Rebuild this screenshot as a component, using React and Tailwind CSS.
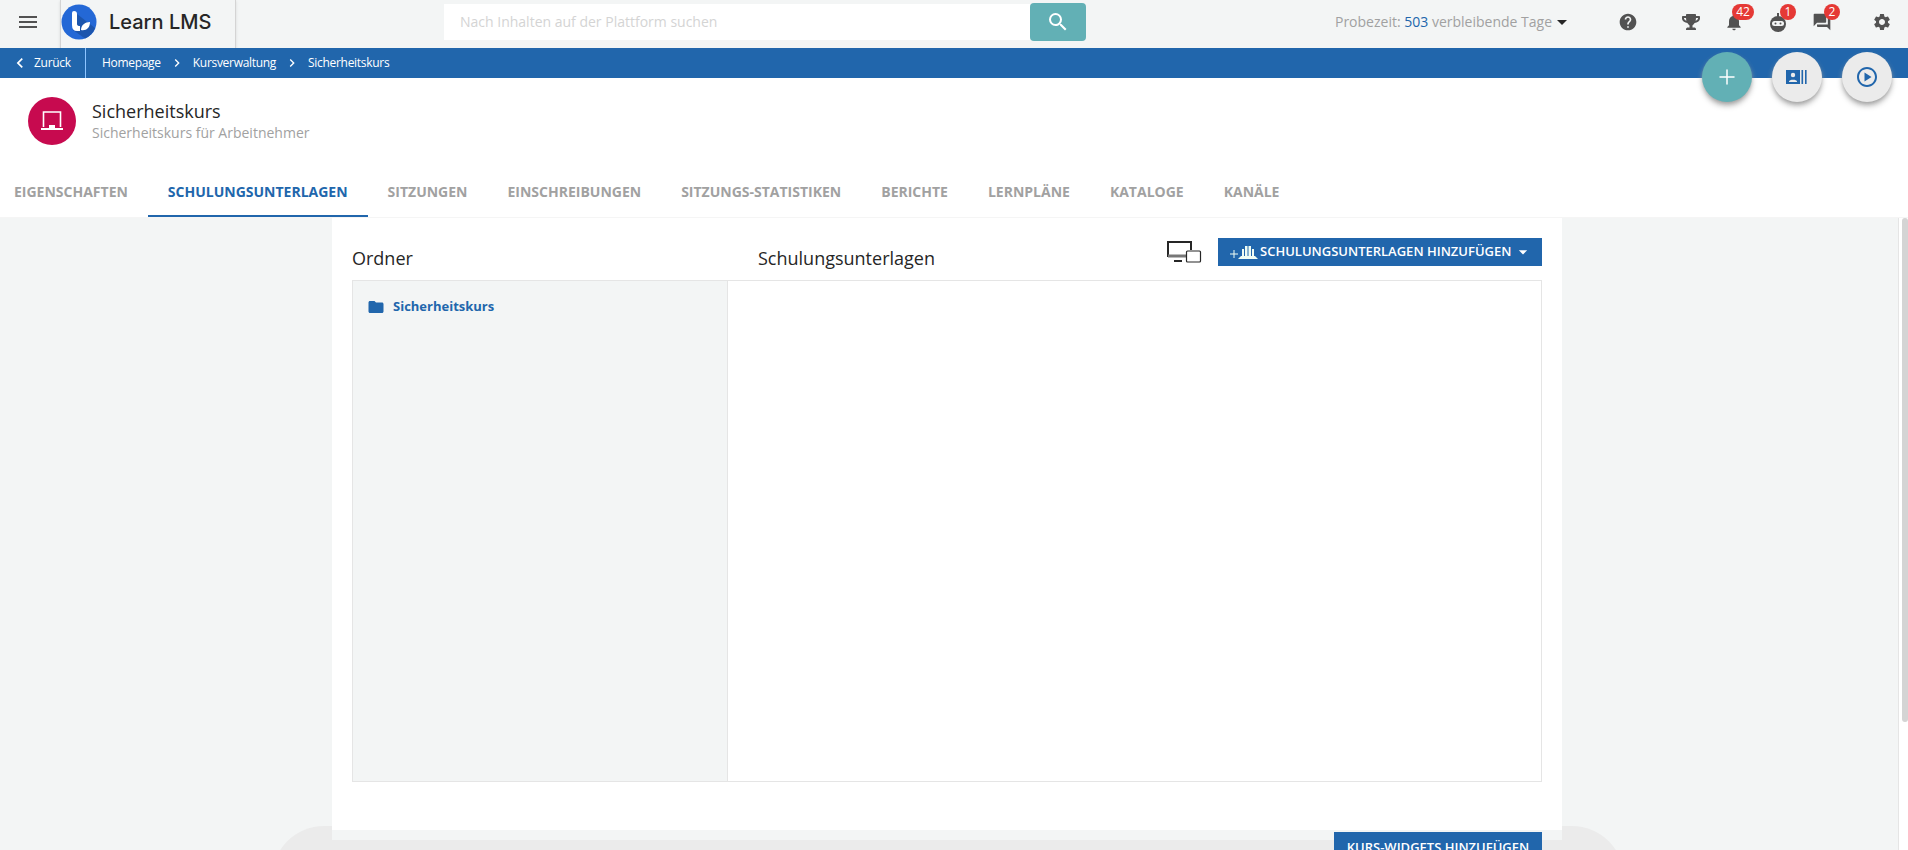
import { MdMenu, MdSearch, MdHelp, MdNotifications, MdQuestionAnswer, MdSettings, MdFolder, MdArrowDropDown, MdChevronLeft, MdChevronRight, MdOutlinePlayCircle } from "react-icons/md";
import { FaTrophy } from "react-icons/fa";
import { Plus } from "lucide-react";

const tabs = [
  "Eigenschaften",
  "Schulungsunterlagen",
  "Sitzungen",
  "Einschreibungen",
  "Sitzungs-Statistiken",
  "Berichte",
  "Lernpläne",
  "Kataloge",
  "Kanäle",
];

const Logo = () => (
  <svg viewBox="0 0 36 36" className="w-9 h-9 shrink-0">
    <circle cx="18" cy="18" r="17.5" fill="#2468d6" />
    <path d="M16 10 L34 24 A17.5 17.5 0 0 1 24 34.5 L12 26 Z" fill="#1c55ad" />
    <path d="M11 9 Q11 7 13 7 Q16 7 16 10 V20 Q16 22 19 22 V27 H16 Q11 27 11 21 Z" fill="#fff" />
    <path d="M20 26 C20 21 24 18 29 18 C29 24 25 27 20 26 Z" fill="#fff" />
  </svg>
);

const Badge = ({ className, children }) => (
  <span className={`absolute -top-2 h-4 rounded-full bg-[#e53935] text-white text-xs flex items-center justify-center ${className}`}>
    {children}
  </span>
);

const Robot = () => (
  <svg viewBox="0 0 20 20" className="w-5 h-5" fill="currentColor">
    <circle cx="10" cy="12" r="8" />
    <rect x="9" y="1" width="2" height="4" />
    <rect x="4" y="9" width="12" height="5" rx="2.5" fill="#f3f5f5" />
    <circle cx="7.5" cy="11.5" r="1" />
    <circle cx="12.5" cy="11.5" r="1" />
  </svg>
);

const Devices = () => (
  <svg viewBox="0 0 36 24" className="w-9 h-6 mt-0.5 text-neutral-800" fill="none" stroke="currentColor">
    <path d="M20 16 H2 V2 H25 V10" strokeWidth="2" />
    <path d="M2 16 H20" strokeWidth="3" stroke="#777" />
    <rect x="8" y="20" width="8" height="2" fill="currentColor" stroke="none" />
    <rect x="20.5" y="11" width="14" height="11" rx="1" fill="#fff" strokeWidth="1.2" />
  </svg>
);

const AddMaterial = () => (
  <svg viewBox="0 0 28 16" className="w-7 h-4 text-green-50 shrink-0" fill="currentColor">
    <path d="M0 10 H8 M4 6 V14" stroke="currentColor" fill="none" />
    <path d="M8 15 H28 L25 12 H11 Z" />
    <rect x="12" y="5" width="2" height="7" />
    <rect x="15" y="2" width="2.5" height="10" />
    <rect x="18.5" y="2" width="2.5" height="10" />
    <rect x="22" y="5" width="2" height="7" />
  </svg>
);

const CardIcon = () => (
  <svg viewBox="0 0 22 14" className="w-5.5 h-3.5" fill="currentColor">
    <rect width="14" height="14" />
    <circle cx="7" cy="5" r="2.2" fill="#ebebeb" />
    <path d="M3 11.5 C3 9 11 9 11 11.5 V12 H3 Z" fill="#ebebeb" />
    <rect x="15.5" width="1.6" height="14" />
    <rect x="19" width="1.6" height="14" />
  </svg>
);

const Screen = () => (
  <svg viewBox="0 0 24 20" className="w-6 h-5 text-white" fill="none" stroke="currentColor" strokeWidth="1.6">
    <path d="M3.5 16 V1 H20.5 V16" />
    <rect x="9" y="14" width="6" height="3" fill="currentColor" stroke="none" />
    <rect x="1" y="17" width="22" height="2" fill="currentColor" stroke="none" />
  </svg>
);

const Fab = ({ className, children }) => (
  <div className={`w-12.5 h-12.5 rounded-full shadow-md shadow-neutral-400 flex items-center justify-center ${className}`}>
    {children}
  </div>
);

export default function App() {
  return (
    <div className="relative h-[850px] overflow-hidden flex flex-col bg-white text-neutral-800 font-['Open_Sans',sans-serif]">
      {/* top bar */}
      <header className="h-12 shrink-0 bg-[#f3f5f5] flex items-center pb-1">
        <div className="w-15 flex justify-center pr-1">
          <MdMenu className="w-6 h-6 text-neutral-600" />
        </div>
        <div className="w-44 self-stretch -mb-1 pb-1 flex items-center gap-3 border-x border-neutral-300 shadow-sm">
          <Logo />
          <span className="font-['Inter',sans-serif] font-medium text-xl text-neutral-800">Learn LMS</span>
        </div>
        <div className="ml-52 flex items-center">
          <div className="w-[586px] h-9 bg-white px-4 flex items-center text-sm text-neutral-300">
            Nach Inhalten auf der Plattform suchen
          </div>
          <div className="w-14 h-9.5 rounded-sm bg-[#62b0b5] flex items-center justify-center">
            <MdSearch className="w-6 h-6 text-white" />
          </div>
        </div>
        <div className="ml-auto flex items-center">
          <div className="flex items-center text-sm text-neutral-400">
            Probezeit:&nbsp;<span className="text-[#2166ac]">503</span>&nbsp;verbleibende Tage
            <MdArrowDropDown className="w-6 h-6 text-neutral-800 -ml-0.5" />
          </div>
          <div className="ml-11 mr-4 flex items-center gap-10 text-neutral-600">
            <MdHelp className="w-5 h-5 mr-1" />
            <div className="flex items-center gap-6">
              <FaTrophy className="w-4.5 h-4.5" />
              <div className="relative">
                <MdNotifications className="w-5 h-5" />
                <Badge className="left-2 w-5.5">42</Badge>
              </div>
              <div className="relative">
                <Robot />
                <Badge className="left-3 w-4">1</Badge>
              </div>
              <div className="relative">
                <MdQuestionAnswer className="w-5 h-5" />
                <Badge className="left-3 w-4">2</Badge>
              </div>
            </div>
            <MdSettings className="w-5 h-5" />
          </div>
        </div>
      </header>

      {/* breadcrumb */}
      <nav className="h-7.5 shrink-0 bg-[#2166ac] flex items-center text-xs tracking-tight text-white">
        <div className="h-full w-[86px] border-r border-blue-300 flex items-center pl-2.5 gap-1">
          <MdChevronLeft className="w-5 h-5" />
          Zurück
        </div>
        <div className="ml-4 flex items-center gap-2">
          <span>Homepage</span>
          <MdChevronRight className="w-4 h-4" />
          <span>Kursverwaltung</span>
          <MdChevronRight className="w-4 h-4" />
          <span>Sicherheitskurs</span>
        </div>
      </nav>

      {/* floating buttons */}
      <div className="absolute top-13 right-4 flex gap-5">
        <Fab className="bg-[#62b0b5] text-white">
          <Plus className="w-6 h-6" strokeWidth={1.5} />
        </Fab>
        <Fab className="bg-[#ebebeb] text-[#2166ac]">
          <CardIcon />
        </Fab>
        <Fab className="bg-[#ebebeb] text-[#2166ac]">
          <MdOutlinePlayCircle className="w-6 h-6" />
        </Fab>
      </div>

      {/* course header */}
      <div className="h-17.5 shrink-0 flex items-center gap-4 pl-7 pt-4">
        <div className="w-12 h-12 rounded-full bg-[#c70a4f] flex items-center justify-center">
          <Screen />
        </div>
        <div>
          <div className="text-lg leading-6 text-neutral-800">Sicherheitskurs</div>
          <div className="text-sm text-neutral-400">Sicherheitskurs für Arbeitnehmer</div>
        </div>
      </div>

      {/* tabs */}
      <div className="h-17.5 shrink-0 flex border-b border-neutral-100 -ml-1.5">
        {tabs.map((t, i) => (
          <div
            key={t}
            className={`h-full flex items-center px-5 pt-5 text-sm font-bold uppercase border-b-2 ${
              i === 1 ? "text-[#2166ac] border-[#2166ac]" : "text-neutral-400 border-transparent"
            }`}
          >
            {t}
          </div>
        ))}
      </div>

      {/* body */}
      <div className="relative flex-1 min-h-0 bg-[#f3f5f5] flex">
        <div className="absolute left-68 right-71 top-152 h-16 bg-[#ebebeb] rounded-t-[52px]" />
        <div className="relative flex-1 flex justify-center pr-1">
          <main className="w-[1230px] bg-white flex flex-col">
            <div className="flex items-start h-7 mt-5 px-5">
              <h2 className="w-[406px] mt-1.5 text-lg text-neutral-800">Ordner</h2>
              <h2 className="mt-1.5 text-lg text-neutral-800">Schulungsunterlagen</h2>
              <div className="ml-auto flex items-start gap-4">
                <Devices />
                <button className="h-7 w-81 bg-[#2166ac] flex items-center pl-3 gap-0.5 whitespace-nowrap text-[13px] font-semibold uppercase text-white">
                  <AddMaterial />
                  Schulungsunterlagen hinzufügen
                  <MdArrowDropDown className="w-5 h-5 shrink-0" />
                </button>
              </div>
            </div>
            <div className="mx-5 mt-3.5 h-[502px] shrink-0 border border-neutral-200 flex">
              <div className="w-[375px] bg-[#f3f5f5] border-r border-neutral-200 pt-4 pl-3.5 flex items-start gap-2">
                <MdFolder className="w-4.5 h-5 text-[#2166ac]" />
                <span className="text-[13px] font-bold text-[#2166ac]">Sicherheitskurs</span>
              </div>
              <div className="flex-1 bg-white" />
            </div>
            <div className="relative mt-12 flex-1 bg-[#f3f5f5]">
              <div className="mt-2.5 h-full bg-[#ebebeb]" />
              <button className="absolute top-0.5 right-5 w-52 h-8 bg-[#2166ac] text-[13px] font-semibold uppercase text-white">
                Kurs-Widgets hinzufügen
              </button>
            </div>
          </main>
        </div>
        <div className="relative w-2.5 bg-white border-l border-neutral-200 flex justify-end">
          <div className="w-1.5 h-[504px] bg-neutral-300 rounded-sm" />
        </div>
      </div>
    </div>
  );
}
